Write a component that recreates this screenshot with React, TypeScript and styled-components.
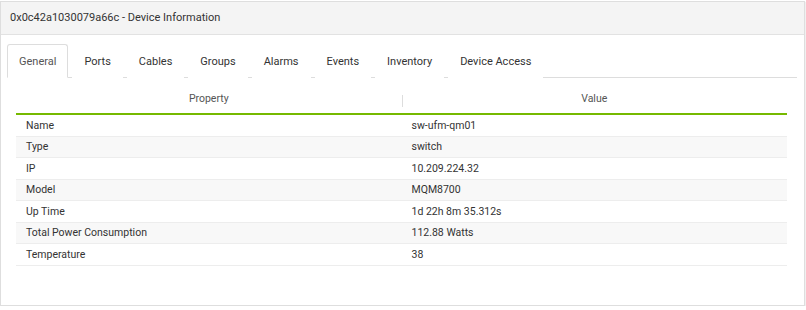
import React from 'react';
import styled, { createGlobalStyle } from 'styled-components';

const GlobalStyle = createGlobalStyle`
  body {
    margin: 0;
    background: #ffffff;
    font-family: Roboto, "Liberation Sans", Arial, sans-serif;
    color: #333333;
  }
`;

const tabs = ['General', 'Ports', 'Cables', 'Groups', 'Alarms', 'Events', 'Inventory', 'Device Access'];

const rows: [string, string][] = [
  ['Name', 'sw-ufm-qm01'],
  ['Type', 'switch'],
  ['IP', '10.209.224.32'],
  ['Model', 'MQM8700'],
  ['Up Time', '1d 22h 8m 35.312s'],
  ['Total Power Consumption', '112.88 Watts'],
  ['Temperature', '38'],
];

const App = () => {
  return (
    <>
      <GlobalStyle />
      <Panel>
        <PanelHeader>0x0c42a1030079a66c - Device Information</PanelHeader>
        <PanelBody>
          <TabBar>
            {tabs.map((t, i) => (
              <Tab key={t} active={i === 0}>{t}</Tab>
            ))}
          </TabBar>

          <Table>
            <HeadRow>
              <HeadCell>Property</HeadCell>
              <HeadCell divider>Value</HeadCell>
            </HeadRow>
            {rows.map(([k, v], i) => (
              <Row key={k} striped={i % 2 === 1}>
                <Cell>{k}</Cell>
                <Cell>{v}</Cell>
              </Row>
            ))}
          </Table>
        </PanelBody>
      </Panel>
    </>
  );
};

export default App;

const Panel = styled.div`
  margin: 1px 1px 0 0;
  width: 803px;
  border: 1px solid #dedede;
  box-shadow: 1px 1px 1px rgba(0, 0, 0, 0.06);
  background: #ffffff;
`;

const PanelHeader = styled.div`
  height: 33px;
  display: flex;
  align-items: center;
  padding-left: 9px;
  padding-bottom: 1px;
  box-sizing: border-box;
  background: #f4f4f4;
  border-bottom: 1px solid #e2e2e2;
  font-size: 11px;
  color: #333333;
`;

const PanelBody = styled.div`
  padding: 9px 7px 39px 6px;
`;

const TabBar = styled.div`
  display: flex;
  height: 33px;
  border-bottom: 1px solid #dddddd;
`;

const Tab = styled.div<{ active?: boolean }>`
  display: flex;
  align-items: center;
  padding: 0 11px;
  margin-right: 4px;
  margin-bottom: -1px;
  font-size: 11px;
  border: 1px solid ${(p) => (p.active ? '#dddddd' : 'transparent')};
  border-bottom-color: ${(p) => (p.active ? '#ffffff' : 'transparent')};
  border-radius: 3px 3px 0 0;
  background: #ffffff;
  color: ${(p) => (p.active ? '#555555' : '#333333')};
`;

const Table = styled.div`
  margin: 6px 10px 0 9px;
`;

const HeadRow = styled.div`
  display: grid;
  grid-template-columns: 1fr 1fr;
  height: 29px;
  border-bottom: 2px solid #76b900;
`;

const HeadCell = styled.div<{ divider?: boolean }>`
  position: relative;
  display: flex;
  align-items: center;
  justify-content: center;
  font-size: 10.5px;
  color: #555555;

  &::before {
    content: '';
    display: ${(p) => (p.divider ? 'block' : 'none')};
    position: absolute;
    left: 0;
    top: 11px;
    height: 12px;
    border-left: 1px solid #dddddd;
  }
`;

const Row = styled.div<{ striped?: boolean }>`
  display: grid;
  grid-template-columns: 1fr 1fr;
  height: 21.5px;
  box-sizing: border-box;
  background: ${(p) => (p.striped ? '#f8f8f8' : '#ffffff')};
  border-bottom: 1px solid #ededed;
`;

const Cell = styled.div`
  display: flex;
  align-items: center;
  padding-left: 10px;
  font-size: 10.5px;
  color: #333333;
  white-space: nowrap;
`;
